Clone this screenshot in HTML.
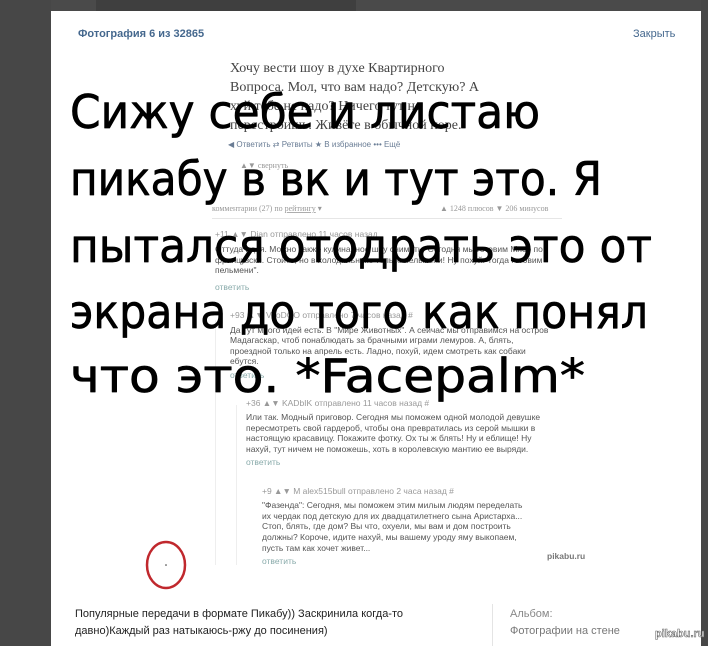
<!DOCTYPE html>
<html><head><meta charset="utf-8"><style>
html,body{margin:0;padding:0;width:708px;height:646px;overflow:hidden;background:#fff}
svg{display:block}
</style></head><body>
<svg width="708" height="646" viewBox="0 0 708 646" xmlns="http://www.w3.org/2000/svg">
<rect width="708" height="646" fill="#fff"/>
<rect x="0" y="0" width="708" height="11" fill="#4a4a4a"/>
<rect x="0" y="0" width="51" height="646" fill="#474747"/>
<rect x="701" y="0" width="7" height="646" fill="#474747"/>
<rect x="96" y="0" width="260" height="11" fill="#3f3f3f"/>
<g font-family="Liberation Sans, sans-serif" font-size="11" fill="#45688e">
<text x="78" y="37" font-weight="bold">Фотография 6 из 32865</text>
<text x="633" y="37">Закрыть</text>
</g>
<g font-family="Liberation Serif, serif" font-size="14" fill="#444">
<text x="230" y="72">Хочу вести шоу в духе Квартирного</text>
<text x="230" y="91">Вопроса. Мол, что вам надо? Детскую? А</text>
<text x="230" y="110">хуй тебе не надо? Ничего тут не</text>
<text x="230" y="129">перестроишь. Живёте в обычной норе.</text>
</g>
<g font-family="Liberation Sans, sans-serif" font-size="8" fill="#6a7d95">
<text x="228" y="147">◀ Ответить   ⇄ Ретвиты   ★ В избранное   ••• Ещё</text>
</g>
<g font-family="Liberation Serif, serif" font-size="8" fill="#999">
<text x="240" y="168">▲▼  свернуть</text>
<text x="212" y="211">комментарии (27) по  <tspan text-decoration="underline">рейтингу</tspan> ▾</text>
<text x="440" y="211">▲ 1248 плюсов   ▼ 206 минусов</text>
</g>
<rect x="212" y="218" width="350" height="1" fill="#e6e6e6"/>
<rect x="215" y="320" width="1" height="245" fill="#eee"/>
<rect x="236" y="405" width="1" height="160" fill="#eee"/>
<g font-family="Liberation Sans, sans-serif" font-size="8.5" fill="#555">
<text x="215" y="237" fill="#999">+11 ▲▼ Dian отправлено 11 часов назад</text>
<text x="215" y="252">Оттуда идея. Можно также кулинарное шоу снимать "Сегодня мы готовим Мясо по</text>
<text x="215" y="263">французски. Стойте, но в холодильнике только пельмени! Ну похуй. Тогда готовим</text>
<text x="215" y="273">пельмени".</text>
<text x="215" y="290" fill="#8aa">ответить</text>
<text x="230" y="318" fill="#999">+93 ▲▼ VooDOO отправлено 7 часов назад  #</text>
<text x="230" y="333">Да тут много идей есть. В "Мире Животных". А сейчас мы отправимся на остров</text>
<text x="230" y="343">Мадагаскар, чтоб понаблюдать за брачными играми лемуров. А, блять,</text>
<text x="230" y="354">проездной только на апрель есть. Ладно, похуй, идем смотреть как собаки</text>
<text x="230" y="364">ебутся.</text>
<text x="230" y="378" fill="#8aa">ответить</text>
<text x="246" y="406" fill="#999">+36 ▲▼ KADbIK отправлено 11 часов назад  #</text>
<text x="246" y="420">Или так. Модный приговор. Сегодня мы поможем одной молодой девушке</text>
<text x="246" y="431">пересмотреть свой гардероб, чтобы она превратилась из серой мышки в</text>
<text x="246" y="441">настоящую красавицу. Покажите фотку. Ох ты ж блять! Ну и еблище! Ну</text>
<text x="246" y="452">нахуй, тут ничем не поможешь, хоть в королевскую мантию ее выряди.</text>
<text x="246" y="465" fill="#8aa">ответить</text>
<text x="262" y="494" fill="#999">+9 ▲▼ M alex515bull отправлено 2 часа назад  #</text>
<text x="262" y="508">"Фазенда": Сегодня, мы поможем этим милым людям переделать</text>
<text x="262" y="519">их чердак под детскую для их двадцатилетнего сына Аристарха...</text>
<text x="262" y="529">Стоп, блять, где дом? Вы что, охуели, мы вам и дом построить</text>
<text x="262" y="540">должны? Короче, идите нахуй, мы вашему уроду яму выкопаем,</text>
<text x="262" y="551">пусть там как хочет живет...</text>
<text x="262" y="564" fill="#8aa">ответить</text>
<text x="547" y="559" fill="#777" font-weight="bold">pikabu.ru</text>
</g>
<ellipse cx="166" cy="565" rx="19" ry="23" fill="none" stroke="#c0282d" stroke-width="2.5"/>
<circle cx="166" cy="565" r="0.8" fill="#333"/>
<g font-family="DejaVu Sans, sans-serif" font-size="46" fill="#000" stroke="#000" stroke-width="0.7" stroke-linejoin="round">
<text x="70" y="128" textLength="470" lengthAdjust="spacingAndGlyphs">Сижу себе и листаю</text>
<text x="70" y="195" textLength="532" lengthAdjust="spacingAndGlyphs">пикабу в вк и тут это. Я</text>
<text x="70" y="262" textLength="582" lengthAdjust="spacingAndGlyphs">пытался отодрать это от</text>
<text x="70" y="328" textLength="578" lengthAdjust="spacingAndGlyphs">экрана до того как понял</text>
<text x="70" y="392" textLength="515" lengthAdjust="spacingAndGlyphs">что это. *Facepalm*</text>
</g>
<rect x="492" y="604" width="1" height="42" fill="#e4e4e4"/>
<g font-family="Liberation Sans, sans-serif" font-size="11">
<text x="75" y="617" fill="#222">Популярные передачи в формате Пикабу)) Заскринила когда-то</text>
<text x="75" y="634" fill="#222">давно)Каждый раз натыкаюсь-ржу до посинения)</text>
<text x="510" y="617" fill="#888">Альбом:</text>
<text x="510" y="634" fill="#777">Фотографии на стене</text>
</g>
<text x="655" y="637" font-family="Liberation Sans, sans-serif" font-size="11" font-weight="bold" fill="#fff" stroke="#666" stroke-width="0.6">pikabu.ru</text>
</svg>
</body></html>
